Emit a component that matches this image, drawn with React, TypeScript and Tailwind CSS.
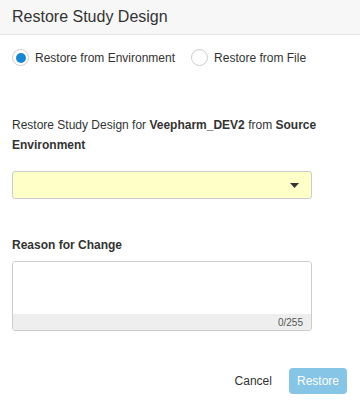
import React from 'react';

export default function App() {
  return (
    <div className="w-[360px] h-[405px] bg-white text-[#333] overflow-hidden" style={{ fontFamily: '"Liberation Sans", Arial, sans-serif' }}>
      <div className="h-[35px] bg-[#f7f7f7] border-b border-[#e5e5e5] flex items-center px-3">
        <h1 className="text-[16px] text-[#333]">Restore Study Design</h1>
      </div>

      <div className="px-3">
        <div className="flex items-center h-[44px] pt-[1px] text-[12px]">
          <label className="flex items-center gap-[6px]">
            <span className="w-[17px] h-[17px] rounded-full border border-[#ccc] flex items-center justify-center">
              <span className="w-[10px] h-[10px] rounded-full bg-[#1a86cf]" />
            </span>
            Restore from Environment
          </label>
          <label className="flex items-center gap-[6px] ml-[16px]">
            <span className="w-[17px] h-[17px] rounded-full border border-[#ccc]" />
            Restore from File
          </label>
        </div>

        <p className="mt-[36px] text-[12px] leading-[20px] w-[320px]">
          Restore Study Design for <b>Veepharm_DEV2</b> from <b>Source Environment</b>
        </p>

        <div className="mt-[16px] w-[300px] h-[28px] bg-[#ffffc8] border border-[#ccc] rounded-[3px] flex items-center justify-end pr-[12px]">
          <svg width="9" height="5" viewBox="0 0 9 5">
            <path d="M0 0 L9 0 L4.5 5 Z" fill="#333" />
          </svg>
        </div>

        <p className="mt-[38px] text-[12px] font-bold leading-[16px]">Reason for Change</p>

        <div className="mt-[8px] w-[300px] h-[70px] border border-[#ccc] rounded-[3px] flex flex-col overflow-hidden">
          <div className="flex-1 bg-white" />
          <div className="h-[16px] bg-[#eee] flex items-center justify-end pr-[8px] text-[10px] text-[#555]">0/255</div>
        </div>
      </div>

      <div className="flex items-center justify-end gap-[17px] pr-[13px] mt-[37px]">
        <button className="text-[12px] text-[#333]">Cancel</button>
        <button className="h-[26px] px-[8px] rounded-[4px] bg-[#86c5e5] text-white text-[12px]">Restore</button>
      </div>
    </div>
  );
}
